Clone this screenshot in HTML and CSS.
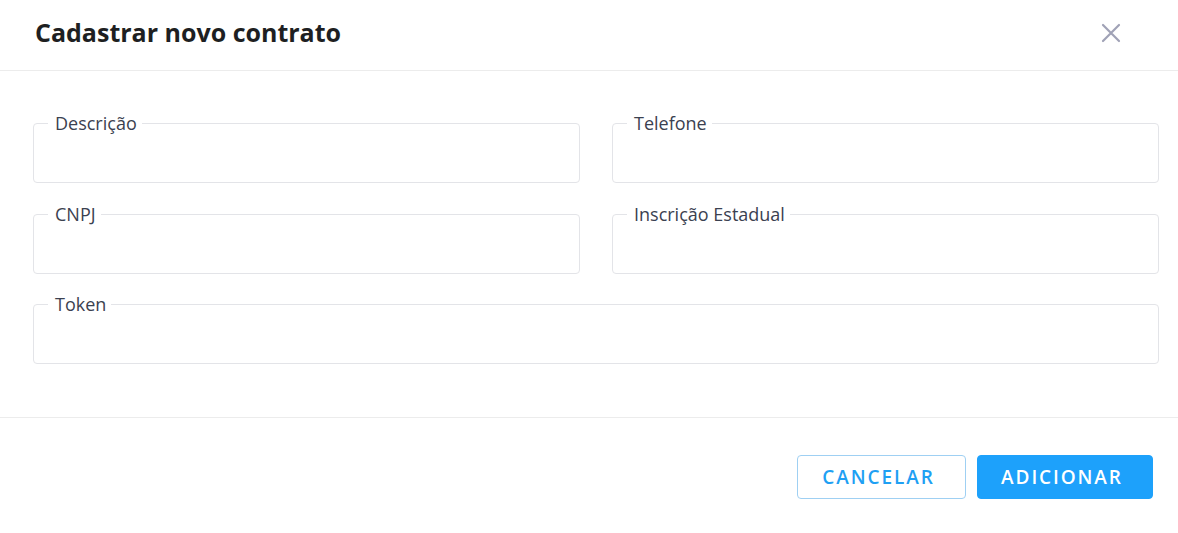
FILE: index.html
```html
<!DOCTYPE html>
<html lang="pt-BR">
<head>
<meta charset="utf-8">
<link rel="stylesheet" href="styles.css">
</head>
<body>
<div class="dialog">
  <header class="dialog-header">
    <h1 class="dialog-title">Cadastrar novo contrato</h1>
    <button class="close-btn" aria-label="Fechar">
      <svg width="20" height="20" viewBox="0 0 20 20"><path d="M2 2 L18 18 M18 2 L2 18" stroke="#a0a2b6" stroke-width="2.2" stroke-linecap="round" fill="none"/></svg>
    </button>
  </header>
  <div class="dialog-body">
    <fieldset class="field"><legend>Descrição</legend><input class="field-input" type="text"></fieldset>
    <fieldset class="field"><legend>Telefone</legend><input class="field-input" type="text"></fieldset>
    <fieldset class="field"><legend>CNPJ</legend><input class="field-input" type="text"></fieldset>
    <fieldset class="field"><legend>Inscrição Estadual</legend><input class="field-input" type="text"></fieldset>
    <fieldset class="field field-wide"><legend>Token</legend><input class="field-input" type="text"></fieldset>
  </div>
  <footer class="dialog-footer">
    <button class="btn btn-outline">CANCELAR</button>
    <button class="btn btn-primary">ADICIONAR</button>
  </footer>
</div>
</body>
</html>
```
FILE: styles.css
```css
* { box-sizing: border-box; }
html, body { margin: 0; padding: 0; background: #ffffff; }
body { font-family: "Open Sans", "Noto Sans", sans-serif; color: #1f2023; }

.dialog { width: 1178px; }

.dialog-header {
  height: 71px;
  display: flex;
  align-items: center;
  justify-content: space-between;
  padding: 0 57px 0 35px;
  border-bottom: 1px solid #ececec;
}
.dialog-title {
  margin: 0 0 6px 0;
  font-size: 25px;
  font-weight: 700;
  color: #1e1f22;
  letter-spacing: 0;
}
.close-btn {
  border: 0;
  background: none;
  padding: 0;
  width: 20px;
  height: 20px;
  margin-bottom: 5px;
  cursor: pointer;
  display: flex;
}

.dialog-body {
  display: grid;
  grid-template-columns: 1fr 1fr;
  column-gap: 32px;
  row-gap: 21px;
  padding: 42px 19px 53px 33px;
  border-bottom: 1px solid #ececec;
}
.field {
  margin: 0;
  padding: 0 14px;
  height: 70px;
  border: 1px solid #e3e4e8;
  border-radius: 4px;
  min-width: 0;
}
.field-wide { grid-column: 1 / span 2; margin-top: -1px; }
.field legend {
  padding: 0 5px 0 7px;
  font-size: 18px;
  line-height: 21px;
  color: #3b4150;
}
.field-input {
  display: block;
  width: 100%;
  height: 44px;
  border: 0;
  outline: none;
  background: transparent;
  font-family: inherit;
  font-size: 16px;
}

.dialog-footer {
  display: flex;
  justify-content: flex-end;
  gap: 11px;
  padding: 37px 25px 0 0;
}
.btn {
  height: 44px;
  border-radius: 4px;
  font-family: "Open Sans", "Noto Sans", sans-serif;
  font-size: 19px;
  font-weight: 600;
  letter-spacing: 1.9px;
  cursor: pointer;
  padding: 0 6px 0 0;
}
.btn-outline {
  width: 169px;
  background: #fff;
  color: #1fa0f3;
  border: 1px solid #9fd0f3;
}
.btn-primary {
  width: 176px;
  background: #1da1fb;
  color: #ffffff;
  border: 1px solid #1da1fb;
}
```
